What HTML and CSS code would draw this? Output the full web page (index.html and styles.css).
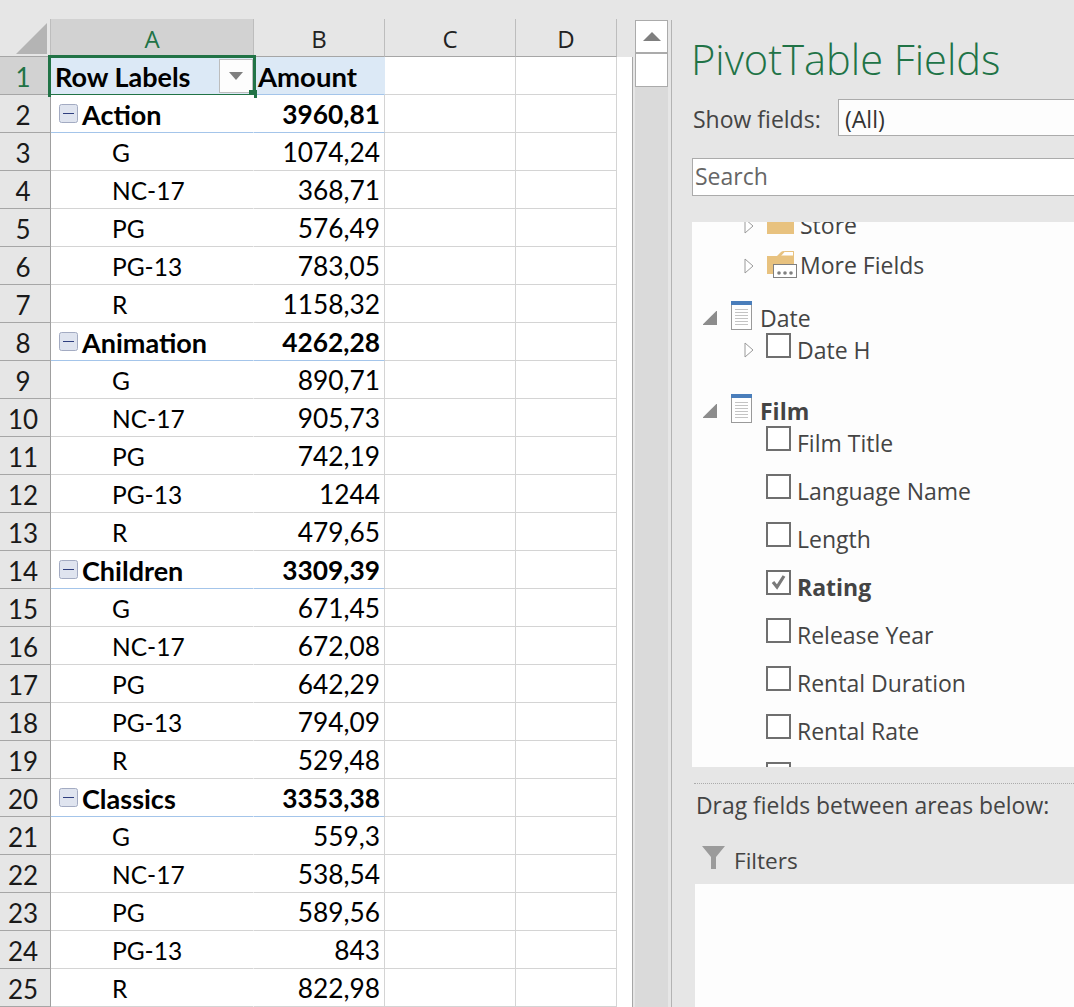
FILE: index.html
```html
<!DOCTYPE html>
<html lang="en">
<head>
<meta charset="utf-8">
<title>PivotTable Fields</title>
<link rel="stylesheet" href="styles.css">
</head>
<body>
<svg class="defs" width="0" height="0" aria-hidden="true">
  <symbol id="minus" viewBox="0 0 19 19"><rect x="0.5" y="0.5" width="18" height="18" rx="2" fill="#dfe4ef" stroke="#a3abc2"/><rect x="4" y="9" width="11" height="1" fill="#2f3f7f"/></symbol>
  <symbol id="open" viewBox="0 0 10 10"><path d="M10 0V10H0L10 0Z" fill="#8c8c8c" stroke="none" transform="translate(-0.5 -0.5) scale(1.05)"/></symbol>
  <symbol id="closed" viewBox="0 0 10 16"><path d="M1 1L9 8L1 15Z" fill="#fff" stroke="#9a9a9a"/></symbol>
  <symbol id="doc" viewBox="0 0 21 29"><rect x="0.5" y="0.5" width="20" height="28" fill="#fff" stroke="#9a9a9a"/><rect x="0" y="0" width="21" height="4" fill="#4a7ebb"/><path d="M4 8.5H17M4 11.5H17M4 14.5H17M4 17.5H17M4 20.5H17M4 23.5H17" stroke="#c4c4c4"/></symbol>
</svg>
<main class="app">
  <section class="sheet">
    <div class="strip"></div>
    <div class="row head">
      <div class="corner"><svg width="31" height="31" viewBox="0 0 31 31"><path d="M31 0V31H0Z" fill="#b4b4b4"/></svg></div>
      <div class="col sel">A</div><div class="col">B</div><div class="col">C</div><div class="col">D</div>
    </div>
    <div class="row first">
      <div class="num sel">1</div>
      <div class="a cap"><b>Row Labels</b>
        <span class="drop"><i></i></span>
        <span class="cursor"><span class="handle"></span></span>
      </div>
      <div class="b cap left"><b>Amount</b></div><div class="c"></div><div class="d"></div>
    </div>
    <div class="row grp"><div class="num">2</div><div class="a"><svg class="box"><use href="#minus"/></svg><b>Action</b></div><div class="b"><b>3960,81</b></div><div class="c"></div><div class="d"></div></div>
    <div class="row"><div class="num">3</div><div class="a sub">G</div><div class="b">1074,24</div><div class="c"></div><div class="d"></div></div>
    <div class="row"><div class="num">4</div><div class="a sub">NC-17</div><div class="b">368,71</div><div class="c"></div><div class="d"></div></div>
    <div class="row"><div class="num">5</div><div class="a sub">PG</div><div class="b">576,49</div><div class="c"></div><div class="d"></div></div>
    <div class="row"><div class="num">6</div><div class="a sub">PG-13</div><div class="b">783,05</div><div class="c"></div><div class="d"></div></div>
    <div class="row"><div class="num">7</div><div class="a sub">R</div><div class="b">1158,32</div><div class="c"></div><div class="d"></div></div>
    <div class="row grp"><div class="num">8</div><div class="a"><svg class="box"><use href="#minus"/></svg><b>Animation</b></div><div class="b"><b>4262,28</b></div><div class="c"></div><div class="d"></div></div>
    <div class="row"><div class="num">9</div><div class="a sub">G</div><div class="b">890,71</div><div class="c"></div><div class="d"></div></div>
    <div class="row"><div class="num">10</div><div class="a sub">NC-17</div><div class="b">905,73</div><div class="c"></div><div class="d"></div></div>
    <div class="row"><div class="num">11</div><div class="a sub">PG</div><div class="b">742,19</div><div class="c"></div><div class="d"></div></div>
    <div class="row"><div class="num">12</div><div class="a sub">PG-13</div><div class="b">1244</div><div class="c"></div><div class="d"></div></div>
    <div class="row"><div class="num">13</div><div class="a sub">R</div><div class="b">479,65</div><div class="c"></div><div class="d"></div></div>
    <div class="row grp"><div class="num">14</div><div class="a"><svg class="box"><use href="#minus"/></svg><b>Children</b></div><div class="b"><b>3309,39</b></div><div class="c"></div><div class="d"></div></div>
    <div class="row"><div class="num">15</div><div class="a sub">G</div><div class="b">671,45</div><div class="c"></div><div class="d"></div></div>
    <div class="row"><div class="num">16</div><div class="a sub">NC-17</div><div class="b">672,08</div><div class="c"></div><div class="d"></div></div>
    <div class="row"><div class="num">17</div><div class="a sub">PG</div><div class="b">642,29</div><div class="c"></div><div class="d"></div></div>
    <div class="row"><div class="num">18</div><div class="a sub">PG-13</div><div class="b">794,09</div><div class="c"></div><div class="d"></div></div>
    <div class="row"><div class="num">19</div><div class="a sub">R</div><div class="b">529,48</div><div class="c"></div><div class="d"></div></div>
    <div class="row grp"><div class="num">20</div><div class="a"><svg class="box"><use href="#minus"/></svg><b>Classics</b></div><div class="b"><b>3353,38</b></div><div class="c"></div><div class="d"></div></div>
    <div class="row"><div class="num">21</div><div class="a sub">G</div><div class="b">559,3</div><div class="c"></div><div class="d"></div></div>
    <div class="row"><div class="num">22</div><div class="a sub">NC-17</div><div class="b">538,54</div><div class="c"></div><div class="d"></div></div>
    <div class="row"><div class="num">23</div><div class="a sub">PG</div><div class="b">589,56</div><div class="c"></div><div class="d"></div></div>
    <div class="row"><div class="num">24</div><div class="a sub">PG-13</div><div class="b">843</div><div class="c"></div><div class="d"></div></div>
    <div class="row"><div class="num">25</div><div class="a sub">R</div><div class="b">822,98</div><div class="c"></div><div class="d"></div></div>
  </section>

  <div class="scroll">
    <div class="sbtn"><svg width="18" height="9" viewBox="0 0 18 9"><path d="M9 0L18 9H0Z" fill="#7f7f7f"/></svg></div>
    <div class="thumb"></div>
  </div>

  <aside class="panel">
    <h1 class="title">PivotTable Fields</h1>
    <div class="show"><span class="show-label">Show fields:</span><div class="select">(All)</div></div>
    <div class="search">Search</div>
    <div class="list">
      <div class="item store"><svg class="tw closed"><use href="#closed"/></svg><svg class="folder" width="27" height="16" viewBox="0 0 27 16"><rect width="27" height="16" fill="#e8c27f"/></svg><span>Store</span></div>
      <div class="item more"><svg class="tw closed"><use href="#closed"/></svg>
        <svg class="folder" width="31" height="28" viewBox="0 0 31 28"><path d="M0 6H10L14 2Q15 1 17 1H27V24H0Z" fill="#e8c27f"/><path d="M18 1.5H26.5V6H14" fill="#fff" stroke="#e8c27f"/><rect x="6.500" y="14.500" width="23" height="13" fill="#fff" stroke="#808080"/><circle cx="12" cy="23" r="1.800" fill="#808080"/><circle cx="18" cy="23" r="1.800" fill="#808080"/><circle cx="24" cy="23" r="1.800" fill="#808080"/></svg><span>More Fields</span></div>
      <div class="item tbl date"><svg class="tw open"><use href="#open"/></svg><svg class="doc"><use href="#doc"/></svg><span>Date</span></div>
      <div class="item field dateh"><svg class="tw closed sub-tw"><use href="#closed"/></svg><span class="check"></span><span>Date H</span></div>
      <div class="item tbl film"><svg class="tw open"><use href="#open"/></svg><svg class="doc"><use href="#doc"/></svg><b>Film</b></div>
      <div class="item field first-field"><span class="check"></span><span>Film Title</span></div>
      <div class="item field"><span class="check"></span><span>Language Name</span></div>
      <div class="item field"><span class="check"></span><span>Length</span></div>
      <div class="item field"><span class="check"><svg width="20" height="20" viewBox="0 0 20 20"><path d="M4 10L8 15L15 4" fill="none" stroke="#7a7a7a" stroke-width="3.200"/></svg></span><b>Rating</b></div>
      <div class="item field"><span class="check"></span><span>Release Year</span></div>
      <div class="item field"><span class="check"></span><span>Rental Duration</span></div>
      <div class="item field"><span class="check"></span><span>Rental Rate</span></div>
      <div class="item field"><span class="check"></span></div>
    </div>
    <div class="dots"></div>
    <div class="drag">Drag fields between areas below:</div>
    <div class="filters"><svg width="23" height="23" viewBox="0 0 23 23"><path d="M0 0H23L14 11V23H9V11Z" fill="#9b9b9b"/></svg><span>Filters</span></div>
    <div class="area"></div>
  </aside>
</main>
</body>
</html>
```

FILE: styles.css
```css
* { box-sizing: border-box; }
html, body { margin: 0; height: 1007px; overflow: hidden; }
b { font-weight: 700; }
.defs { position: absolute; }
.app { display: flex; width: 1074px; height: 1007px; background: #e6e6e6; overflow: hidden; }

/* sheet */
.sheet { width: 633px; flex: none; font: 400 24.5px "Lato", "Liberation Sans", sans-serif; color: #000; border-right: 1px solid #a6a6a6; height: 1007px; }
.strip { height: 19px; background: #e6e6e6; margin-right: -1px; }
.row { display: grid; grid-template-columns: 51px 203px 131px 131px 101px 1fr; height: 38px; }
.row::after { content: ""; height: 38px; background: #fff; border-bottom: 1px solid #d4d4d4; }
.row > div { height: 38px; padding-top: 2px; border-bottom: 1px solid #d4d4d4; border-right: 1px solid #d4d4d4; background: #fff; display: flex; align-items: center; line-height: 1; }
.row.head { margin-right: -1px; }
.row.head::after { background: #e6e6e6; border-bottom-color: #a6a6a6; }
.row.head > div { background: #e6e6e6; justify-content: center; padding: 2px 0 0; border-bottom: 1px solid #a6a6a6; border-right: 1px solid #bdbdbd; font-family: "Open Sans", sans-serif; font-size: 24px; color: #222; }
.row.head > .col.sel { background: #d2d2d2; color: #217346; }
.row.head > .corner { align-items: flex-start; justify-content: flex-end; padding: 4px 3px 0 0; }
.row > .num { background: #e6e6e6; border-bottom: 1px solid #a6a6a6; border-right: 1px solid #9f9f9f; justify-content: center; padding-right: 4px; color: #1a1a1a; font-size: 26px; }
.row > .num.sel { background: #d2d2d2; color: #217346; }
.row > .a { padding-left: 8px; position: relative; border-right-color: #fff; }
.row > .a.sub { padding: 3px 0 0 61px; }
.row > .a b { font-size: 27px; }
.row > .b { justify-content: flex-end; padding-right: 4px; font-size: 26.3px; }
.row.grp > .a, .row.grp > .b { border-bottom-color: #a4c5ea; }
.row.first > .cap { background: #dce9f6; border-bottom-color: #a4c5ea; border-right-color: #dce9f6; }
.row > .a.cap { padding-left: 4px; }
.row > .b.left { justify-content: flex-start; padding: 2px 0 0 4px; }
.row > .b.left b { font-size: 27.5px; }
.box { width: 19px; height: 19px; margin-right: 4px; margin-top: -2px; flex: none; }
.drop { position: absolute; left: 168px; top: 2px; width: 34px; height: 34px; background: #fdfdfd; border: 1px solid #bdbdbd; display: flex; align-items: center; justify-content: center; }
.drop i { display: block; width: 0; height: 0; border: 7px solid transparent; border-top: 8px solid #7f7f7f; border-bottom: 0; }
.cursor { position: absolute; left: -3px; top: -2px; width: 208px; height: 42px; border: 3px solid #217346; pointer-events: none; }
.handle { position: absolute; right: -4px; bottom: -4px; width: 8px; height: 8px; background: #217346; }

/* scrollbar */
.scroll { width: 39px; flex: none; padding: 20px 0 0 2px; position: relative; display: flex; flex-direction: column; align-items: flex-start; }
.scroll::before { content: ""; position: absolute; left: 2px; width: 33px; top: 53px; bottom: 0; background: #dadada; }
.scroll::after { content: ""; position: absolute; right: 0; width: 1px; top: 20px; bottom: 0; background: #b3b3b3; }
.sbtn, .thumb { width: 33px; background: #fff; border: 1px solid #ababab; position: relative; z-index: 1; }
.sbtn { height: 33px; display: flex; align-items: center; justify-content: center; }
.thumb { height: 34px; }

/* panel */
.panel { flex: 1; min-width: 0; padding-left: 20px; color: #444; font: 400 23px "Open Sans", "Noto Sans", sans-serif; display: flex; flex-direction: column; }
.title { margin: 33px 0 0; height: 52px; font: 300 41.6px/52px "Open Sans", sans-serif; color: #217346; white-space: nowrap; margin-left: -1px; }
.show { display: flex; align-items: center; height: 37px; margin-top: 14px; white-space: nowrap; }
.show-label { width: 146px; flex: none; padding-left: 1px; padding-top: 2px; }
.select { flex: none; width: 300px; height: 37px; background: #fdfdfd; border: 1px solid #ababab; padding-left: 6px; line-height: 39px; color: #333; }
.search { width: 420px; flex: none; height: 38px; margin-top: 22px; background: #fff; border: 1px solid #ababab; padding-left: 2px; line-height: 35px; color: #666; }
.list { height: 545px; flex: none; margin-top: 26px; background: #fdfdfd; overflow: hidden; width: 420px; }
.item { display: flex; align-items: center; height: 32px; position: relative; white-space: nowrap; }
.tw { flex: none; }
.tw.closed { width: 10px; height: 16px; margin-left: 52px; }
.tw.open { width: 14px; height: 14px; margin-left: 11px; }
.store { margin-top: -12px; height: 32px; }
.store .folder { margin-left: 13px; margin-right: 6px; }
.store span, .more span { margin-top: -2px; }
.more { height: 32px; margin-top: 8px; }
.more .folder { margin-left: 13px; margin-right: 2px; position: relative; top: -2px; }
.date { margin-top: 20px; }
.doc { width: 21px; height: 29px; margin-left: 14px; margin-right: 8px; flex: none; position: relative; top: -3px; }
.field { padding-left: 74px; }
.field .check { flex: none; width: 25px; height: 25px; border: 2px solid #6f6f6f; background: #fff; margin-right: 7px; position: relative; top: -5px; display: flex; align-items: center; justify-content: center; }
.field > span:last-child, .field > b { margin-left: -1px; }
.field > .check:last-child { margin-left: 0; }
.dateh { padding-left: 0; }
.dateh .tw { margin-right: 12px; }
.film { margin-top: 29px; }
.field + .field { margin-top: 16px; }
.dots { flex: none; height: 1px; margin-top: 16px; margin-left: 2px; width: 420px; border-top: 1px dotted #ababab; }
.drag { margin: 6px 0 0 4px; height: 32px; line-height: 32px; white-space: nowrap; font-size: 22.9px; }
.filters { display: flex; align-items: center; height: 32px; margin: 22px 0 0 10px; }
.filters span { margin-left: -1px; font-size: 22.6px; }
.filters svg { margin-top: -5px; margin-right: 10px; }
.area { flex: 1; margin-left: 3px; margin-right: -20px; margin-top: 8px; background: #fdfdfd; }
```
